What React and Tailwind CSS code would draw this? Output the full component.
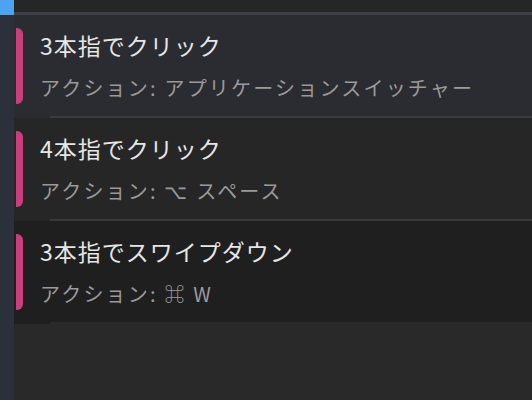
import React from 'react';

const ITEMS = [
  { title: '3本指でクリック', action: 'アプリケーションスイッチャー', bg: 'bg-[#2a2c31]', edge: 'bg-[#2a2c31]', line: 'bg-[#3a3b3e]' },
  { title: '4本指でクリック', action: '⌥ スペース', bg: 'bg-[#262626]', edge: 'bg-[#262626]', line: 'bg-[#393939]' },
  { title: '3本指でスワイプダウン', action: '⌘ W', bg: 'bg-[#1f1f1f]', edge: 'bg-[#1f1f1f]', line: 'bg-[#292929]' },
];

const font = { fontFamily: '"Noto Sans CJK JP", "Noto Sans", sans-serif' };

const GestureRow = ({ item }) => (
  <div>
    <div className={`flex h-[101px] ${item.bg}`}>
      <div className="flex w-[26px] shrink-0 items-center pl-[2px]">
        <div className="h-[76px] w-[7px] rounded-r-[6px] bg-[#c93f7b]" />
      </div>
      <div className="flex flex-col justify-center pb-[1px]">
        <div className="text-[23px] leading-[30px] tracking-[1px] text-[#e6e6e6]">{item.title}</div>
        <div className="mt-[15px] text-[20px] leading-[26px] tracking-[2.2px] text-[#9a9a9a]">
          アクション: {item.action}
        </div>
      </div>
    </div>
    {/* separator, inset on the left */}
    <div className="flex h-[2px]">
      <div className={`w-[36px] ${item.edge}`} />
      <div className={`flex-1 ${item.line}`} />
    </div>
  </div>
);

export default function App() {
  return (
    <div className="flex h-[400px] w-[532px] overflow-hidden bg-[#292929]" style={font}>
      {/* sidebar strip */}
      <div className="flex w-[14px] shrink-0 flex-col bg-[#2b303b]">
        <div className="h-[15px] bg-[#4ea2f2]" />
      </div>

      <div className="flex flex-1 flex-col">
        <div className="h-[12px] bg-[#262626]" />
        <div className="h-[3px] bg-[#3d4047]" />
        {ITEMS.map((item) => (
          <GestureRow key={item.title} item={item} />
        ))}
      </div>
    </div>
  );
}
